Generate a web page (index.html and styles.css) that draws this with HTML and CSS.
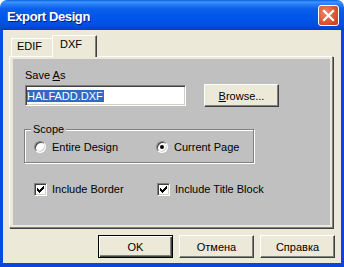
FILE: index.html
```html
<!DOCTYPE html>
<html>
<head>
<meta charset="utf-8">
<link rel="stylesheet" href="styles.css">
</head>
<body>
<div class="window">
  <div class="titlebar">
    <span class="title">Export Design</span>
    <span class="close">
      <svg width="21" height="21" viewBox="0 0 21 21"><path d="M6 6 L15 15 M15 6 L6 15" stroke="#fff" stroke-width="2.2" stroke-linecap="square"/></svg>
    </span>
  </div>
  <div class="client">
    <div class="tabs">
      <div class="tab edif">EDIF</div>
      <div class="tab active">DXF</div>
    </div>
    <div class="panel">
      <div class="page">
        <div class="field-label">Save <u>A</u>s</div>
        <div class="save-row">
          <div class="input"><span class="sel">HALFADD.DXF</span></div>
          <button class="btn"><u>B</u>rowse...</button>
        </div>
        <fieldset class="group">
          <legend>Scope</legend>
          <div class="options">
            <label class="radio"><span class="circle"></span>Entire Design</label>
            <label class="radio"><span class="circle on"><span class="dot"></span></span>Current Page</label>
          </div>
        </fieldset>
        <div class="checks">
          <label class="check"><span class="box"><svg width="7" height="7" viewBox="0 0 7 7"><rect x="0" y="2" width="1" height="3"/><rect x="1" y="3" width="1" height="3"/><rect x="2" y="4" width="1" height="3"/><rect x="3" y="3" width="1" height="3"/><rect x="4" y="2" width="1" height="3"/><rect x="5" y="1" width="1" height="3"/><rect x="6" y="0" width="1" height="3"/></svg></span>Include Border</label>
          <label class="check"><span class="box"><svg width="7" height="7" viewBox="0 0 7 7"><rect x="0" y="2" width="1" height="3"/><rect x="1" y="3" width="1" height="3"/><rect x="2" y="4" width="1" height="3"/><rect x="3" y="3" width="1" height="3"/><rect x="4" y="2" width="1" height="3"/><rect x="5" y="1" width="1" height="3"/><rect x="6" y="0" width="1" height="3"/></svg></span>Include Title Block</label>
        </div>
      </div>
    </div>
    <div class="actions">
      <button class="btn default">OK</button>
      <button class="btn">Отмена</button>
      <button class="btn">Справка</button>
    </div>
  </div>
</div>
</body>
</html>
```
FILE: styles.css
```css
html, body {
  margin: 0;
  padding: 0;
  background: #ffffff;
}
body {
  font-family: "Liberation Sans", Arial, sans-serif;
  font-size: 11px;
  line-height: 13px;
  color: #000;
}
.window {
  width: 344px;
  height: 267px;
  display: flex;
  flex-direction: column;
}
.titlebar {
  height: 30px;
  flex: none;
  box-sizing: border-box;
  border-radius: 7px 7px 0 0;
  background: linear-gradient(to bottom, #0a5fe0 0px, #3d95ff 2px, #2a80f8 4px, #0a5fec 9px, #0055ea 18px, #0050e0 25px, #0040c8 30px);
  display: flex;
  align-items: center;
  justify-content: space-between;
  padding: 0 5px 0 7px;
}
.title {
  color: #fff;
  font-family: "Liberation Sans", Arial, sans-serif;
  font-weight: bold;
  font-size: 13px;
  letter-spacing: -0.4px;
  text-shadow: 1px 1px #0a1a80;
  padding-top: 2px;
}
.close {
  width: 21px;
  height: 21px;
  box-sizing: border-box;
  border: 1px solid #fff;
  border-radius: 3px;
  background: radial-gradient(circle at 35% 35%, #ee8a6a 0%, #dd5a38 50%, #c23c18 100%);
  display: flex;
  align-items: center;
  justify-content: center;
  margin-top: 1px;
}
.close svg {
  display: block;
  margin: -1px;
}
.client {
  flex: 1;
  box-sizing: border-box;
  background: #ece9d8;
  border: 3px solid #0846dc;
  border-top: 0;
  border-bottom-width: 4px;
  border-left-color: #0a4ae0;
  display: flex;
  flex-direction: column;
}
.tabs {
  display: flex;
  align-items: flex-end;
  height: 22px;
  margin: 5px 0 -1px 8px;
}
.tab {
  box-sizing: border-box;
  background: #ece9d8;
  border-top: 1px solid #fff;
  border-left: 1px solid #fff;
  position: relative;
}
.tab.edif {
  width: 41px;
  height: 18px;
  margin-bottom: 1px;
  padding: 1px 0 0 5px;
}
.tab.active {
  width: 45px;
  height: 22px;
  padding: 2px 0 0 7px;
  border-right: 1px solid #404040;
  box-shadow: inset -1px 0 #808080;
  z-index: 1;
}
.panel {
  height: 172px;
  box-sizing: border-box;
  margin: 0 8px 0 6px;
  border: 1px solid;
  border-color: #fff #808080 #808080 #fff;
  box-shadow: 1px 1px 0 #404040;
  padding: 2px 2px 2px 3px;
}
.page {
  height: 100%;
  box-sizing: border-box;
  background: #c0c0c0;
  padding: 10px 0 0 11px;
}
.field-label {
  margin-left: 1px;
}
.save-row {
  display: flex;
  align-items: center;
  gap: 18px;
  margin-top: 2px;
  height: 23px;
}
.input {
  width: 161px;
  height: 21px;
  box-sizing: border-box;
  margin-left: 1px;
  background: #fff;
  border: 1px solid;
  border-color: #808080 #fff #fff #808080;
  box-shadow: inset 1px 1px #404040, inset -1px -1px #d4d0c8;
  display: flex;
  align-items: center;
  padding-left: 1px;
}
.sel {
  background: #316ac5;
  color: #fff;
  line-height: 12px;
  padding: 0 1px 0 0;
}
.btn {
  width: 75px;
  height: 23px;
  box-sizing: border-box;
  background: #ece9d8;
  font-family: "Liberation Sans", Arial, sans-serif;
  font-size: 11px;
  color: #000;
  border: 1px solid;
  border-color: #fff #404040 #404040 #fff;
  box-shadow: inset -1px -1px #808080;
  padding: 0;
  margin: 0;
}
.btn.default {
  border-color: #000;
  box-shadow: inset 1px 1px #fff, inset -1px -1px #404040, inset -2px -2px #808080;
}
.group {
  margin: 16px 0 0 0;
  width: 230px;
  box-sizing: border-box;
  border: 1px solid #808080;
  box-shadow: inset 1px 1px #fff, 1px 1px 0 #fff;
  padding: 5px 0 9px 9px;
  min-inline-size: 0;
}
.group legend {
  padding: 0 2px;
  margin-left: -3px;
  line-height: 13px;
  background: #c0c0c0;
}
.options {
  display: grid;
  grid-template-columns: 122px auto;
}
.radio {
  display: flex;
  align-items: center;
  gap: 6px;
  height: 12px;
}
.circle {
  width: 12px;
  height: 12px;
  box-sizing: border-box;
  border-radius: 50%;
  background: #fff;
  border: 1px solid;
  border-color: #808080 #fff #fff #808080;
  box-shadow: inset 1px 1px #404040, inset -1px -1px #d4d0c8;
  display: flex;
  align-items: center;
  justify-content: center;
}
.dot {
  width: 4px;
  height: 4px;
  border-radius: 50%;
  background: #000;
}
.checks {
  display: grid;
  grid-template-columns: 123px auto;
  margin-top: 20px;
  padding-left: 10px;
}
.check {
  display: flex;
  align-items: center;
  gap: 5px;
  height: 13px;
}
.box {
  width: 13px;
  height: 13px;
  box-sizing: border-box;
  background: #fff;
  border: 1px solid;
  border-color: #808080 #fff #fff #808080;
  box-shadow: inset 1px 1px #404040, inset -1px -1px #d4d0c8;
  display: flex;
  align-items: center;
  justify-content: center;
}
.box svg {
  display: block;
  fill: #000;
}
.actions {
  display: flex;
  justify-content: flex-end;
  gap: 6px;
  margin: 7px 6px 0 0;
}
```
